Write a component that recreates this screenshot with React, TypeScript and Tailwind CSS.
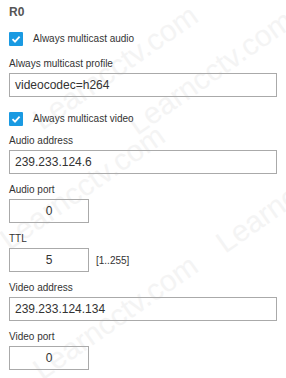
import React from "react";

const font = { fontFamily: '"Liberation Sans", Arial, sans-serif' };

function Check() {
  return (
    <span className="flex h-[14px] w-[14px] items-center justify-center rounded-[1px] bg-[#1a9ae2]">
      <svg width="10" height="10" viewBox="0 0 10 10">
        <path d="M1.5 5.2 L4 7.6 L8.6 2.6" stroke="#fff" strokeWidth="1.8" fill="none" />
      </svg>
    </span>
  );
}

function Field({ label, value, wide, extra, mb = "mb-[10px]" }: { label: string; value: string; wide?: boolean; extra?: string; mb?: string }) {
  return (
    <div className={mb}>
      <div className="mb-[3px] h-[12px] text-[10px] leading-[12px] text-[#333]">{label}</div>
      <div className="flex items-center">
        <div
          className={`flex h-[24px] items-center border border-[#aaa] text-[12px] text-[#333] ${wide ? "w-[268px] pl-[5px]" : "w-[80px] justify-center"}`}
        >
          {value}
        </div>
        {extra && <span className="ml-[7px] text-[10px] text-[#333]">{extra}</span>}
      </div>
    </div>
  );
}

const marks = [
  { l: 45, t: 135 },
  { l: 140, t: 140 },
  { l: 12, t: 255 },
  { l: 228, t: 258 },
  { l: 45, t: 385 },
];

export default function App() {
  return (
    <div className="relative h-[378px] w-[286px] overflow-hidden bg-white pl-[9px]" style={font}>
      {marks.map((m, i) => (
        <div
          key={i}
          className="pointer-events-none absolute whitespace-nowrap text-[30px] leading-none text-[#f4f4f4]"
          style={{ left: m.l, top: m.t - 30, transform: "rotate(-35deg)", transformOrigin: "0 100%" }}
        >
          Learncctv.com
        </div>
      ))}
      <div className="relative">
        <div className="pt-[5px] text-[12px] font-bold leading-[14px] text-[#555]">R0</div>
        <div className="mt-[12px] flex items-center gap-[10px]">
          <Check />
          <span className="text-[10px] text-[#333]">Always multicast audio</span>
        </div>
        <div className="mt-[12px]">
          <Field label="Always multicast profile" value="videocodec=h264" wide mb="mb-0" />
        </div>
        <div className="mt-[14px] flex items-center gap-[10px]">
          <Check />
          <span className="text-[10px] text-[#333]">Always multicast video</span>
        </div>
        <div className="mt-[9px]">
          <Field label="Audio address" value="239.233.124.6" wide />
          <Field label="Audio port" value="0" />
          <Field label="TTL" value="5" extra="[1..255]" />
          <Field label="Video address" value="239.233.124.134" wide />
          <Field label="Video port" value="0" />
        </div>
      </div>
    </div>
  );
}
